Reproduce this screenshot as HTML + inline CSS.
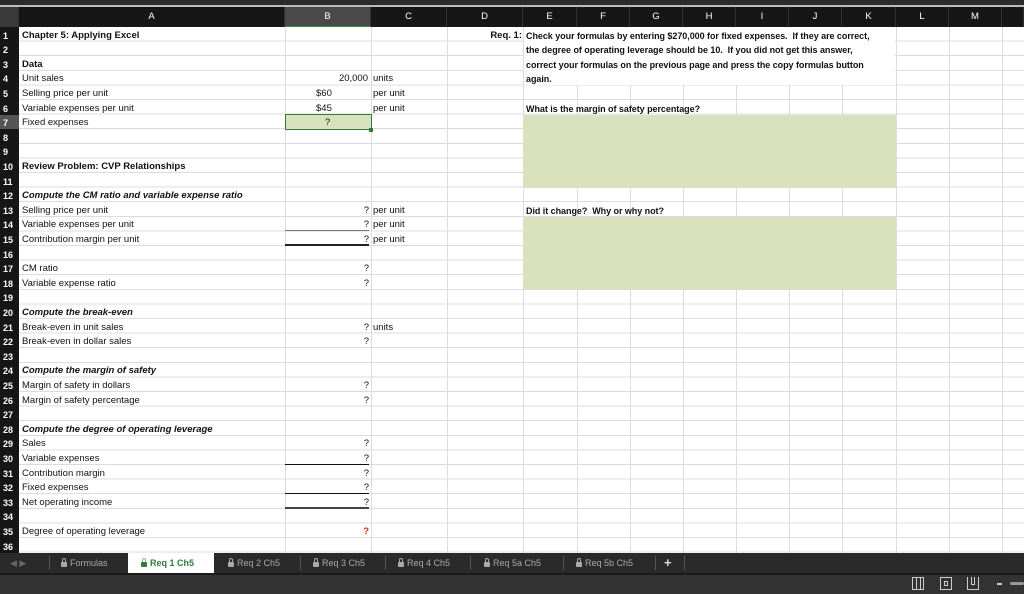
<!DOCTYPE html>
<html><head><meta charset="utf-8"><style>
*{margin:0;padding:0;box-sizing:border-box}
body{width:1024px;height:594px;overflow:hidden;background:#fff;position:relative;font-family:"Liberation Sans",Arial,sans-serif;font-size:9.5px;color:#111}
.top{position:absolute;left:0;top:0;width:1024px;height:7px;background:#2b2b2b;border-bottom:2px solid #bbb}
.hdr{position:absolute;top:7px;height:20px;background:#161616;color:#fff;font-size:9.5px;text-align:center;line-height:20px;border-right:1px solid #333}
.grid{position:absolute;left:19px;top:27px;width:1005px;height:526px;
background:repeating-linear-gradient(to bottom,transparent 0,transparent 13.6px,#dcdcdc 13.6px,#dcdcdc 14.6px)}
.v{position:absolute;top:27px;height:526px;width:1px;background:#dcdcdc}
.rh{position:absolute;left:0;top:27px;width:19px;height:526px;background:#161616}
.rn{position:absolute;left:0;width:19px;height:14.6px;line-height:14.6px;padding-top:1.5px;color:#fff;font-weight:bold;font-size:9px;padding-left:3px}
.c{position:absolute;height:14.6px;line-height:14.6px;padding-top:1.5px;white-space:nowrap}
.b{font-weight:bold}.bi{font-weight:bold;font-style:italic}
.rt{text-align:right}
.cal{font-family:"Liberation Sans",sans-serif;font-size:9px;font-weight:bold;letter-spacing:-0.05px}
.green{position:absolute;left:523px;width:373px;background:#d9e2bd}
.tabs{position:absolute;left:0;top:553px;width:1024px;height:20px;background:#2a2a2a}
.tab{position:absolute;top:553px;height:20px;line-height:20px;color:#aaa;font-size:9px}
.sep{position:absolute;top:556px;width:1px;height:14px;background:#555}
.status{position:absolute;left:0;top:573px;width:1024px;height:21px;background:#333;border-top:2px solid #1a1a1a}
.lk{display:inline-block;width:6px;height:5px;background:#aaa;border-radius:1px;position:relative;margin-right:3px;vertical-align:-1px}
.lk:before{content:"";position:absolute;left:1px;top:-4px;width:2px;height:3px;border:1px solid #aaa;border-bottom:none;border-radius:2px 2px 0 0}
</style></head><body>
<div class="top"></div>
<div class="hdr" style="left:0;width:19px;background:#3a3a3a"></div>
<div class="hdr" style="left:19px;width:266px">A</div>
<div class="hdr" style="left:285px;width:86px;background:#4a4a4a;border-bottom:1px solid #2e8b3e">B</div>
<div class="hdr" style="left:371px;width:76px">C</div>
<div class="hdr" style="left:447px;width:76px">D</div>
<div class="hdr" style="left:523px;width:54px">E</div>
<div class="hdr" style="left:577px;width:53px">F</div>
<div class="hdr" style="left:630px;width:53px">G</div>
<div class="hdr" style="left:683px;width:53px">H</div>
<div class="hdr" style="left:736px;width:53px">I</div>
<div class="hdr" style="left:789px;width:53px">J</div>
<div class="hdr" style="left:842px;width:54px">K</div>
<div class="hdr" style="left:896px;width:53px">L</div>
<div class="hdr" style="left:949px;width:53px">M</div>
<div class="hdr" style="left:1002px;width:22px"></div>

<div class="grid"></div>
<div class="v" style="left:285px"></div><div class="v" style="left:371px"></div><div class="v" style="left:447px"></div>
<div class="v" style="left:523px"></div><div class="v" style="left:577px;top:85px;height:468px"></div><div class="v" style="left:630px;top:85px;height:468px"></div>
<div class="v" style="left:683px;top:85px;height:468px"></div><div class="v" style="left:736px;top:85px;height:468px"></div><div class="v" style="left:789px;top:85px;height:468px"></div>
<div class="v" style="left:842px;top:85px;height:468px"></div><div class="v" style="left:896px"></div><div class="v" style="left:949px"></div><div class="v" style="left:1002px"></div>
<div style="position:absolute;left:524px;top:27px;width:371px;height:58px;background:#fff"></div>
<div class="green" style="top:114.6px;height:73px"></div>
<div class="green" style="top:216.8px;height:73px"></div>

<div class="rh"></div>
<div class="rn" style="top:27px">1</div><div class="rn" style="top:41.6px">2</div><div class="rn" style="top:56.2px">3</div><div class="rn" style="top:70.8px">4</div><div class="rn" style="top:85.4px">5</div><div class="rn" style="top:100px">6</div><div class="rn" style="top:114.6px;background:#555">7</div><div class="rn" style="top:129.2px">8</div><div class="rn" style="top:143.8px">9</div><div class="rn" style="top:158.4px">10</div><div class="rn" style="top:173px">11</div><div class="rn" style="top:187.6px">12</div><div class="rn" style="top:202.2px">13</div><div class="rn" style="top:216.8px">14</div><div class="rn" style="top:231.4px">15</div><div class="rn" style="top:246px">16</div><div class="rn" style="top:260.6px">17</div><div class="rn" style="top:275.2px">18</div><div class="rn" style="top:289.8px">19</div><div class="rn" style="top:304.4px">20</div><div class="rn" style="top:319px">21</div><div class="rn" style="top:333.6px">22</div><div class="rn" style="top:348.2px">23</div><div class="rn" style="top:362.8px">24</div><div class="rn" style="top:377.4px">25</div><div class="rn" style="top:392px">26</div><div class="rn" style="top:406.6px">27</div><div class="rn" style="top:421.2px">28</div><div class="rn" style="top:435.8px">29</div><div class="rn" style="top:450.4px">30</div><div class="rn" style="top:465px">31</div><div class="rn" style="top:479.6px">32</div><div class="rn" style="top:494.2px">33</div><div class="rn" style="top:508.8px">34</div><div class="rn" style="top:523.4px">35</div><div class="rn" style="top:538px">36</div>

<!-- column A -->
<div class="c b" style="left:22px;top:27px">Chapter 5: Applying Excel</div>
<div class="c b" style="left:22px;top:56.2px">Data</div>
<div class="c" style="left:22px;top:70.8px">Unit sales</div>
<div class="c" style="left:22px;top:85.4px">Selling price per unit</div>
<div class="c" style="left:22px;top:100px">Variable expenses per unit</div>
<div class="c" style="left:22px;top:114.6px">Fixed expenses</div>
<div class="c b" style="left:22px;top:158.4px">Review Problem: CVP Relationships</div>
<div class="c bi" style="left:22px;top:187.6px">Compute the CM ratio and variable expense ratio</div>
<div class="c" style="left:22px;top:202.2px">Selling price per unit</div>
<div class="c" style="left:22px;top:216.8px">Variable expenses per unit</div>
<div class="c" style="left:22px;top:231.4px">Contribution margin per unit</div>
<div class="c" style="left:22px;top:260.6px">CM ratio</div>
<div class="c" style="left:22px;top:275.2px">Variable expense ratio</div>
<div class="c bi" style="left:22px;top:304.4px">Compute the break-even</div>
<div class="c" style="left:22px;top:319px">Break-even in unit sales</div>
<div class="c" style="left:22px;top:333.6px">Break-even in dollar sales</div>
<div class="c bi" style="left:22px;top:362.8px">Compute the margin of safety</div>
<div class="c" style="left:22px;top:377.4px">Margin of safety in dollars</div>
<div class="c" style="left:22px;top:392px">Margin of safety percentage</div>
<div class="c bi" style="left:22px;top:421.2px">Compute the degree of operating leverage</div>
<div class="c" style="left:22px;top:435.8px">Sales</div>
<div class="c" style="left:22px;top:450.4px">Variable expenses</div>
<div class="c" style="left:22px;top:465px">Contribution margin</div>
<div class="c" style="left:22px;top:479.6px">Fixed expenses</div>
<div class="c" style="left:22px;top:494.2px">Net operating income</div>
<div class="c" style="left:22px;top:523.4px">Degree of operating leverage</div>

<!-- column B -->
<div class="c rt" style="left:285px;width:83px;top:70.8px">20,000</div>
<div class="c" style="left:316px;top:85.4px">$60</div>
<div class="c" style="left:316px;top:100px">$45</div>
<div style="position:absolute;left:285px;top:114px;width:87px;height:16px;background:#d9e2bd;border:1.5px solid #2e7d3a"></div>
<div class="c" style="left:325px;top:114.6px">?</div>
<div style="position:absolute;left:369px;top:128px;width:4px;height:4px;background:#2e7d3a"></div>
<div class="c rt" style="left:285px;width:84px;top:202.2px">?</div>
<div class="c rt" style="left:285px;width:84px;top:216.8px;border-bottom:1px solid #777">?</div>
<div class="c rt" style="left:285px;width:84px;top:231.4px;border-bottom:2px solid #222">?</div>
<div class="c rt" style="left:285px;width:84px;top:260.6px">?</div>
<div class="c rt" style="left:285px;width:84px;top:275.2px">?</div>
<div class="c rt" style="left:285px;width:84px;top:319px">?</div>
<div class="c rt" style="left:285px;width:84px;top:333.6px">?</div>
<div class="c rt" style="left:285px;width:84px;top:377.4px">?</div>
<div class="c rt" style="left:285px;width:84px;top:392px">?</div>
<div class="c rt" style="left:285px;width:84px;top:435.8px">?</div>
<div class="c rt" style="left:285px;width:84px;top:450.4px;border-bottom:1px solid #111">?</div>
<div class="c rt" style="left:285px;width:84px;top:465px">?</div>
<div class="c rt" style="left:285px;width:84px;top:479.6px;border-bottom:1px solid #111">?</div>
<div class="c rt" style="left:285px;width:84px;top:494.2px;border-bottom:2px solid #444">?</div>
<div class="c rt b" style="left:285px;width:84px;top:523.4px;color:#e02020">?</div>

<!-- column C -->
<div class="c" style="left:373px;top:70.8px">units</div>
<div class="c" style="left:373px;top:85.4px">per unit</div>
<div class="c" style="left:373px;top:100px">per unit</div>
<div class="c" style="left:373px;top:202.2px">per unit</div>
<div class="c" style="left:373px;top:216.8px">per unit</div>
<div class="c" style="left:373px;top:231.4px">per unit</div>
<div class="c" style="left:373px;top:319px">units</div>

<!-- D/E text -->
<div class="c b rt" style="left:447px;width:75px;top:27px">Req. 1:</div>
<div class="c cal" style="left:526px;top:27px">Check your formulas by entering $270,000 for fixed expenses.&nbsp; If they are correct,</div>
<div class="c cal" style="left:526px;top:41.6px">the degree of operating leverage should be 10.&nbsp; If you did not get this answer,</div>
<div class="c cal" style="left:526px;top:56.2px">correct your formulas on the previous page and press the copy formulas button</div>
<div class="c cal" style="left:526px;top:70.8px">again.</div>
<div class="c cal" style="left:526px;top:100px">What is the margin of safety percentage?</div>
<div class="c cal" style="left:526px;top:202.2px">Did it change?&nbsp; Why or why not?</div>

<!-- tabs -->
<div class="tabs"></div>
<div class="tab" style="left:10px;color:#666">◀ ▶</div>
<div class="sep" style="left:49px"></div>
<div class="tab" style="left:61px"><span class="lk"></span>Formulas</div>
<div style="position:absolute;left:128px;top:553px;width:86px;height:20px;background:#fff"></div>
<div class="tab" style="left:141px;color:#2e7d3a;font-weight:bold"><span class="lk" style="background:#2e7d3a"></span>Req 1 Ch5</div>
<div class="tab" style="left:228px"><span class="lk"></span>Req 2 Ch5</div>
<div class="sep" style="left:300px"></div>
<div class="tab" style="left:313px"><span class="lk"></span>Req 3 Ch5</div>
<div class="sep" style="left:385px"></div>
<div class="tab" style="left:398px"><span class="lk"></span>Req 4 Ch5</div>
<div class="sep" style="left:470px"></div>
<div class="tab" style="left:484px"><span class="lk"></span>Req 5a Ch5</div>
<div class="sep" style="left:563px"></div>
<div class="tab" style="left:576px"><span class="lk"></span>Req 5b Ch5</div>
<div class="sep" style="left:655px"></div>
<div class="tab" style="left:664px;color:#ddd;font-size:13px;font-weight:bold">+</div>
<div class="sep" style="left:684px"></div>
<div class="status"></div>
<div style="position:absolute;left:912px;top:577px;width:12px;height:13px;border:1px solid #ccc;background:repeating-linear-gradient(90deg,#333 0 3px,#ccc 3px 4px)"></div>
<div style="position:absolute;left:940px;top:577px;width:12px;height:13px;border:1px solid #ccc"><div style="margin:3px;height:5px;border:1px solid #ccc"></div></div>
<div style="position:absolute;left:967px;top:577px;width:12px;height:13px;border:1px solid #ccc;border-top:none"><div style="margin:0 3px;height:8px;border:1px solid #ccc;border-top:none"></div></div>
<div style="position:absolute;left:997px;top:583px;width:5px;height:2px;background:#ccc"></div>
<div style="position:absolute;left:1010px;top:582px;width:14px;height:3px;background:#999;border-radius:2px"></div>
</body></html>
